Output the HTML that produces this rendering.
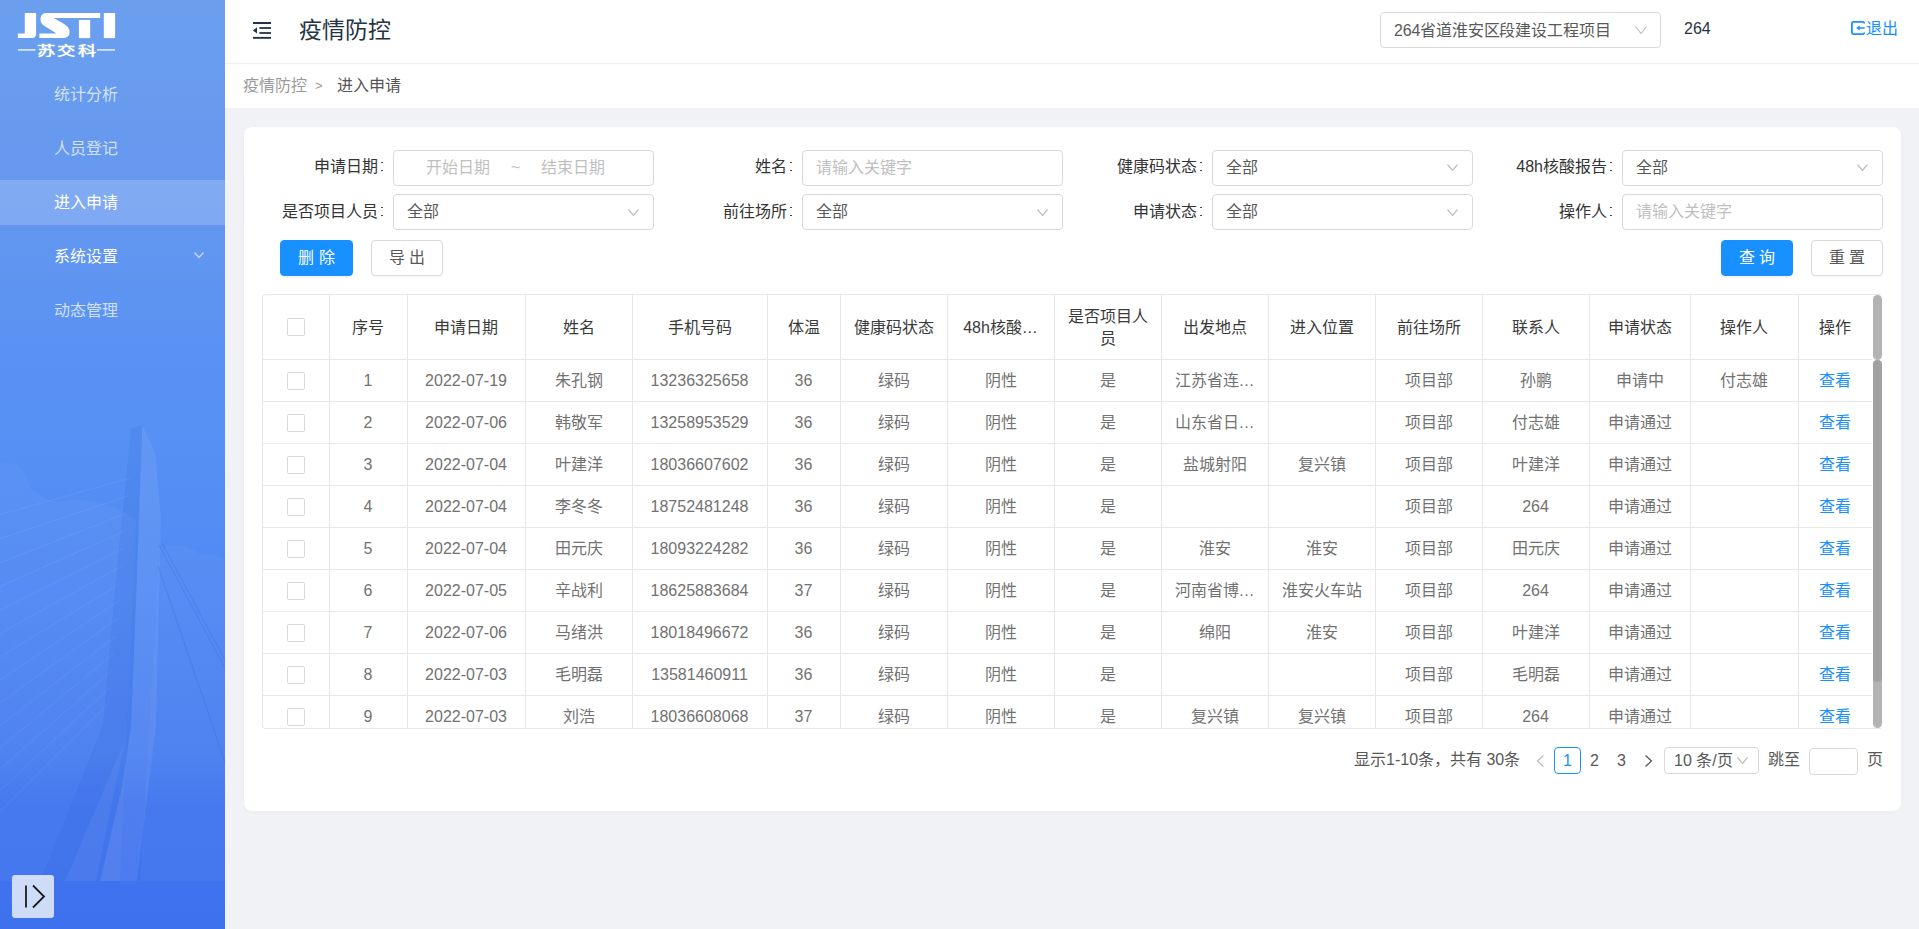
<!DOCTYPE html>
<html lang="zh-CN"><head><meta charset="utf-8">
<style>
*{box-sizing:border-box}
html,body{margin:0;padding:0}
body{width:1919px;height:929px;overflow:hidden;position:relative;background:#f0f2f5;font-family:"Liberation Sans",sans-serif;font-size:16px;color:#595959}
.abs{position:absolute}
#side{position:absolute;left:0;top:0;width:225px;height:929px;background:linear-gradient(180deg,#6b9fee 0%,#6598ef 20%,#5a92f3 38%,#5690f4 48%,#5189f3 64%,#4a7ff0 81%,#4175ee 87%,#3d71ee 100%);overflow:hidden}
.mi{position:absolute;left:54px;font-size:16px;line-height:20px;color:rgba(255,255,255,0.72)}
.mi.on{color:#fff}
#hdr{position:absolute;left:225px;top:0;width:1694px;height:108px;background:#fff}
#hline{position:absolute;left:225px;top:63px;width:1694px;height:1px;background:#eceef1;box-shadow:0 1px 2px rgba(0,0,0,0.03)}
#card{position:absolute;left:244px;top:127px;width:1657px;height:684px;background:#fff;border-radius:8px;box-shadow:0 1px 4px rgba(0,0,0,0.03)}
.lbl{position:absolute;font-size:16px;line-height:20px;color:#333;text-align:right;white-space:nowrap}
.lbl i{display:inline-block;width:6px;height:20px;position:relative;vertical-align:top}
.lbl i:before,.lbl i:after{content:"";position:absolute;left:3px;width:1.5px;height:1.5px;background:#4a4a4a}
.lbl i:before{top:4.6px}
.lbl i:after{top:12.6px}
.inp{position:absolute;height:36px;width:261px;border:1px solid #d9d9d9;border-radius:4px;background:#fff}
.inp span{position:absolute;left:13px;top:7px;line-height:20px;font-size:16px;color:#595959;white-space:nowrap}
.inp span.ph{color:#bfbfbf}
.btn{position:absolute;height:36px;border-radius:4px;font-size:16px;line-height:34px;text-align:center;white-space:pre}
.btn.pri{background:#1890ff;color:#fff;border:1px solid #1890ff;box-shadow:0 2px 0 rgba(0,0,0,0.045)}
.btn.def{background:#fff;color:#595959;border:1px solid #d9d9d9;box-shadow:0 2px 0 rgba(0,0,0,0.015)}
.tb{position:absolute;border:1px solid #e8e8e8;border-right:none;border-radius:4px 0 0 4px}
.vl{position:absolute;width:1px;background:#e8e8e8}
.hl{position:absolute;height:1px;background:#e8e8e8}
.th{position:absolute;text-align:center;font-size:16px;line-height:20px;color:#3a3a3a;white-space:nowrap;padding-top:24px}
.th2{position:absolute;display:flex;align-items:center;justify-content:center;text-align:center;font-size:16px;line-height:22px;color:#3a3a3a;padding-top:2px}
.td{position:absolute;height:42px;line-height:42px;text-align:center;font-size:16px;color:#727272;white-space:nowrap}
.td.link{color:#1890ff}
.cb{position:absolute;width:18px;height:18px;border:1px solid #d9d9d9;border-radius:2px;background:#fff}
</style></head><body>

<div id="side">
  <svg class="abs" style="left:0;top:0" width="225" height="929" viewBox="0 0 225 929">
    <!-- clouds -->
    <path d="M0 464 Q22 458 30 488 Q42 500 60 502 Q90 496 120 510 L136 520 L120 881 L0 881 Z" fill="#ffffff" opacity="0.03"/>
    <path d="M160 548 Q185 540 200 555 Q215 552 225 560 L225 881 L140 881 Z" fill="#ffffff" opacity="0.03"/>
    <!-- pylon dark face -->
    <path d="M131 429 L142.3 425.3 L136 600 L131 725 L122 787 L100 881 L40 881 L78 787 L103 725 L114 600 Z" fill="#2d5ad6" opacity="0.12"/>
    <!-- pylon light face -->
    <path d="M142.3 425.3 L154.7 451.3 L161 516 L159 600 L156 725 L137 881 L100 881 L122 787 L131 725 L136 600 Z" fill="#ffffff" opacity="0.07"/>
    <path d="M125 740 L96 881 L65 881 Z" fill="#ffffff" opacity="0.05"/>
    <!-- cables -->
    <g stroke="#ffffff" stroke-width="1" opacity="0.06">
      <line x1="130.7" y1="478.0" x2="0" y2="514.6"/>
      <line x1="129.1" y1="495.5" x2="0" y2="538.7"/>
      <line x1="127.5" y1="513.0" x2="0" y2="562.7"/>
      <line x1="125.9" y1="530.5" x2="0" y2="586.5"/>
      <line x1="124.3" y1="548.0" x2="0" y2="610.2"/>
      <line x1="122.7" y1="565.5" x2="0" y2="633.6"/>
      <line x1="121.2" y1="583.0" x2="0" y2="656.9"/>
      <line x1="119.6" y1="600.5" x2="0" y2="680.0"/>
      <line x1="118.0" y1="618.0" x2="0" y2="703.0"/>
      <line x1="116.4" y1="635.5" x2="0" y2="725.7"/>
      <line x1="114.2" y1="653.0" x2="0" y2="747.8"/>
      <line x1="111.7" y1="670.5" x2="0" y2="769.3"/>
      <line x1="109.2" y1="688.0" x2="0" y2="790.6"/>
      <line x1="106.7" y1="705.5" x2="0" y2="811.7"/>
    </g>
    <g stroke="#2d5ad6" stroke-width="1.1" opacity="0.2" fill="none">
      <line x1="159" y1="545" x2="225" y2="668"/>
      <line x1="162" y1="543" x2="225" y2="660"/>
      <line x1="158" y1="566" x2="225" y2="762"/>
    </g>
    
  </svg>
  <!-- logo -->
  <svg class="abs" style="left:0;top:0" width="225" height="60" viewBox="0 0 225 60">
    <g fill="#fff">
      <path d="M24.8 13 H36.1 V33.6 Q36.1 38.1 31.6 38.1 H17.9 V33.4 H24.8 Z"/>
      <path d="M46 13 H100.2 V17.9 H53.8 L64.5 24.2 Q69.6 27.5 69.6 32 Q69.6 38.1 62.5 38.1 H39.4 V33.4 H56.5 L44.5 26 Q40.5 23.5 40.5 19.5 Q40.5 13 46 13 Z"/>
      <rect x="78.9" y="19.9" width="11.3" height="18.2"/>
      <rect x="103.8" y="13" width="11.3" height="25.1"/>
      <rect x="18" y="49.2" width="17.5" height="1.4" opacity="0.9"/>
      <rect x="97" y="49.2" width="18" height="1.4" opacity="0.9"/>
    </g>
    <text x="0" y="0" transform="translate(36.5,54.6) scale(1.22,0.86)" font-size="15" font-weight="bold" fill="#fff" letter-spacing="1.9">苏交科</text>
  </svg>
  <div class="mi" style="top:85px">统计分析</div>
  <div class="mi" style="top:139px">人员登记</div>
  <div class="abs" style="left:0;top:180px;width:225px;height:45px;background:rgba(255,255,255,0.18)"></div>
  <div class="mi on" style="top:193px">进入申请</div>
  <div class="mi on" style="top:247px">系统设置</div>
  <svg style="position:absolute;left:194px;top:252px" width="10" height="6" viewBox="0 0 10 6"><polyline points="0.5,0.5 5.0,5.5 9.5,0.5" fill="none" stroke="rgba(255,255,255,0.6)" stroke-width="1.5"/></svg>
  <div class="mi" style="top:301px">动态管理</div>
  <div class="abs" style="left:12px;top:875px;width:42px;height:43px;background:#cfdcf8;border-radius:3px">
    <svg class="abs" style="left:0;top:0" width="42" height="43" viewBox="0 0 42 43">
      <path d="M14 10.5 V32.5" stroke="#1b1b1b" stroke-width="1.8" fill="none"/>
      <path d="M21 10.5 L32 21.5 L21 32.5" stroke="#1b1b1b" stroke-width="1.8" fill="none"/>
    </svg>
  </div>
</div>

<div id="hdr"></div>
<div id="hline"></div>
<!-- menu fold icon -->
<svg class="abs" style="left:246px;top:14px" width="32" height="32" viewBox="0 0 32 32">
  <rect x="7" y="8" width="18" height="2" fill="#203447"/>
  <rect x="13.4" y="13.1" width="11.6" height="1.8" fill="#203447"/>
  <rect x="13.4" y="18.1" width="11.6" height="1.8" fill="#203447"/>
  <rect x="7" y="22.9" width="18" height="1.9" fill="#203447"/>
  <path d="M6.9 16.5 L11 13.3 L11 19.6 Z" fill="#203447"/>
</svg>
<div class="abs" style="left:299px;top:16px;font-size:23px;line-height:28px;color:#243444">疫情防控</div>

<div class="inp" style="left:1380px;top:12px;width:281px;height:36px"><span style="top:8px;letter-spacing:-0.15px">264省道淮安区段建设工程项目</span></div>
<svg style="position:absolute;left:1635px;top:26px" width="12" height="8" viewBox="0 0 12 8"><polyline points="0.5,0.5 6.0,7.5 11.5,0.5" fill="none" stroke="#bfbfbf" stroke-width="1.2"/></svg>
<div class="abs" style="left:1684px;top:19px;font-size:16px;line-height:20px;color:#243444">264</div>
<svg class="abs" style="left:1851px;top:21px" width="14" height="14" viewBox="0 0 14 14">
  <path d="M13.1 1.9 Q13 0.9 11.8 0.9 H2.4 Q0.9 0.9 0.9 2.4 V11.6 Q0.9 13.1 2.4 13.1 H11.8 Q13 13.1 13.1 12.1" stroke="#1890ff" stroke-width="1.8" fill="none" stroke-linecap="round"/>
  <path d="M8 7 H13.1" stroke="#1890ff" stroke-width="1.6" stroke-linecap="round"/>
  <path d="M5.6 7 L8.4 5 L8.4 9 Z" fill="#1890ff" stroke="#1890ff" stroke-width="0.6" stroke-linejoin="round"/>
</svg>
<div class="abs" style="left:1866px;top:19px;font-size:16px;line-height:20px;color:#1890ff">退出</div>

<div class="abs" style="left:243px;top:76px;font-size:16px;line-height:20px;color:#9a9a9a;white-space:nowrap">疫情防控</div>
<div class="abs" style="left:315px;top:77px;font-size:13px;line-height:18px;color:#9a9a9a">&gt;</div>
<div class="abs" style="left:337px;top:76px;font-size:16px;line-height:20px;color:#555;white-space:nowrap">进入申请</div>

<div id="card"></div>

<!-- form row 1 -->
<div class="lbl" style="right:1535px;top:157px">申请日期<i></i></div>
<div class="inp" style="left:393px;top:150px"><span class="ph" style="left:32px">开始日期</span><span class="ph" style="left:117px">~</span><span class="ph" style="left:147px">结束日期</span></div>
<div class="lbl" style="right:1126px;top:157px">姓名<i></i></div>
<div class="inp" style="left:802px;top:150px"><span class="ph">请输入关键字</span></div>
<div class="lbl" style="right:716px;top:157px">健康码状态<i></i></div>
<div class="inp" style="left:1212px;top:150px"><span>全部</span></div>
<div class="lbl" style="right:306px;top:157px">48h核酸报告<i></i></div>
<div class="inp" style="left:1622px;top:150px"><span>全部</span></div>
<svg style="position:absolute;left:1447px;top:164px" width="11" height="7" viewBox="0 0 11 7"><polyline points="0.5,0.5 5.5,6.5 10.5,0.5" fill="none" stroke="#bfbfbf" stroke-width="1.2"/></svg>
<svg style="position:absolute;left:1857px;top:164px" width="11" height="7" viewBox="0 0 11 7"><polyline points="0.5,0.5 5.5,6.5 10.5,0.5" fill="none" stroke="#bfbfbf" stroke-width="1.2"/></svg>

<!-- form row 2 -->
<div class="lbl" style="right:1535px;top:202px">是否项目人员<i></i></div>
<div class="inp" style="left:393px;top:194px"><span>全部</span></div>
<div class="lbl" style="right:1126px;top:202px">前往场所<i></i></div>
<div class="inp" style="left:802px;top:194px"><span>全部</span></div>
<div class="lbl" style="right:716px;top:202px">申请状态<i></i></div>
<div class="inp" style="left:1212px;top:194px"><span>全部</span></div>
<div class="lbl" style="right:306px;top:202px">操作人<i></i></div>
<div class="inp" style="left:1622px;top:194px"><span class="ph">请输入关键字</span></div>
<svg style="position:absolute;left:628px;top:209px" width="11" height="7" viewBox="0 0 11 7"><polyline points="0.5,0.5 5.5,6.5 10.5,0.5" fill="none" stroke="#bfbfbf" stroke-width="1.2"/></svg>
<svg style="position:absolute;left:1037px;top:209px" width="11" height="7" viewBox="0 0 11 7"><polyline points="0.5,0.5 5.5,6.5 10.5,0.5" fill="none" stroke="#bfbfbf" stroke-width="1.2"/></svg>
<svg style="position:absolute;left:1447px;top:209px" width="11" height="7" viewBox="0 0 11 7"><polyline points="0.5,0.5 5.5,6.5 10.5,0.5" fill="none" stroke="#bfbfbf" stroke-width="1.2"/></svg>

<div class="btn pri" style="left:280px;top:240px;width:73px">删 除</div>
<div class="btn def" style="left:371px;top:240px;width:72px">导 出</div>
<div class="btn pri" style="left:1721px;top:240px;width:72px">查 询</div>
<div class="btn def" style="left:1811px;top:240px;width:72px">重 置</div>

<!-- table -->
<div class="tb" style="left:262px;top:294px;width:1619px;height:435px"></div>
<div class="vl" style="left:329px;top:294px;height:434px"></div>
<div class="vl" style="left:407px;top:294px;height:434px"></div>
<div class="vl" style="left:525px;top:294px;height:434px"></div>
<div class="vl" style="left:632px;top:294px;height:434px"></div>
<div class="vl" style="left:767px;top:294px;height:434px"></div>
<div class="vl" style="left:840px;top:294px;height:434px"></div>
<div class="vl" style="left:947px;top:294px;height:434px"></div>
<div class="vl" style="left:1054px;top:294px;height:434px"></div>
<div class="vl" style="left:1161px;top:294px;height:434px"></div>
<div class="vl" style="left:1268px;top:294px;height:434px"></div>
<div class="vl" style="left:1375px;top:294px;height:434px"></div>
<div class="vl" style="left:1482px;top:294px;height:434px"></div>
<div class="vl" style="left:1589px;top:294px;height:434px"></div>
<div class="vl" style="left:1690px;top:294px;height:434px"></div>
<div class="vl" style="left:1798px;top:294px;height:434px"></div>
<div class="hl" style="left:262px;top:359px;width:1610px"></div>
<div class="hl" style="left:262px;top:401px;width:1610px"></div>
<div class="hl" style="left:262px;top:443px;width:1610px"></div>
<div class="hl" style="left:262px;top:485px;width:1610px"></div>
<div class="hl" style="left:262px;top:527px;width:1610px"></div>
<div class="hl" style="left:262px;top:569px;width:1610px"></div>
<div class="hl" style="left:262px;top:611px;width:1610px"></div>
<div class="hl" style="left:262px;top:653px;width:1610px"></div>
<div class="hl" style="left:262px;top:695px;width:1610px"></div>
<div class="cb" style="left:287px;top:318px"></div>
<div class="th" style="left:329px;top:294px;width:78px;height:65px">序号</div>
<div class="th" style="left:407px;top:294px;width:118px;height:65px">申请日期</div>
<div class="th" style="left:525px;top:294px;width:107px;height:65px">姓名</div>
<div class="th" style="left:632px;top:294px;width:135px;height:65px">手机号码</div>
<div class="th" style="left:767px;top:294px;width:73px;height:65px">体温</div>
<div class="th" style="left:840px;top:294px;width:107px;height:65px">健康码状态</div>
<div class="th" style="left:947px;top:294px;width:107px;height:65px">48h核酸…</div>
<div class="th2" style="left:1054px;top:294px;width:107px;height:65px">是否项目人<br>员</div>
<div class="th" style="left:1161px;top:294px;width:107px;height:65px">出发地点</div>
<div class="th" style="left:1268px;top:294px;width:107px;height:65px">进入位置</div>
<div class="th" style="left:1375px;top:294px;width:107px;height:65px">前往场所</div>
<div class="th" style="left:1482px;top:294px;width:107px;height:65px">联系人</div>
<div class="th" style="left:1589px;top:294px;width:101px;height:65px">申请状态</div>
<div class="th" style="left:1690px;top:294px;width:108px;height:65px">操作人</div>
<div class="th" style="left:1798px;top:294px;width:74px;height:65px">操作</div>
<div class="cb" style="left:287px;top:372px"></div>
<div class="td" style="left:329px;top:360px;width:78px">1</div>
<div class="td" style="left:407px;top:360px;width:118px">2022-07-19</div>
<div class="td" style="left:525px;top:360px;width:107px">朱孔钢</div>
<div class="td" style="left:632px;top:360px;width:135px">13236325658</div>
<div class="td" style="left:767px;top:360px;width:73px">36</div>
<div class="td" style="left:840px;top:360px;width:107px">绿码</div>
<div class="td" style="left:947px;top:360px;width:107px">阴性</div>
<div class="td" style="left:1054px;top:360px;width:107px">是</div>
<div class="td" style="left:1161px;top:360px;width:107px">江苏省连…</div>
<div class="td" style="left:1375px;top:360px;width:107px">项目部</div>
<div class="td" style="left:1482px;top:360px;width:107px">孙鹏</div>
<div class="td" style="left:1589px;top:360px;width:101px">申请中</div>
<div class="td" style="left:1690px;top:360px;width:108px">付志雄</div>
<div class="td link" style="left:1798px;top:360px;width:74px">查看</div>
<div class="cb" style="left:287px;top:414px"></div>
<div class="td" style="left:329px;top:402px;width:78px">2</div>
<div class="td" style="left:407px;top:402px;width:118px">2022-07-06</div>
<div class="td" style="left:525px;top:402px;width:107px">韩敬军</div>
<div class="td" style="left:632px;top:402px;width:135px">13258953529</div>
<div class="td" style="left:767px;top:402px;width:73px">36</div>
<div class="td" style="left:840px;top:402px;width:107px">绿码</div>
<div class="td" style="left:947px;top:402px;width:107px">阴性</div>
<div class="td" style="left:1054px;top:402px;width:107px">是</div>
<div class="td" style="left:1161px;top:402px;width:107px">山东省日…</div>
<div class="td" style="left:1375px;top:402px;width:107px">项目部</div>
<div class="td" style="left:1482px;top:402px;width:107px">付志雄</div>
<div class="td" style="left:1589px;top:402px;width:101px">申请通过</div>
<div class="td link" style="left:1798px;top:402px;width:74px">查看</div>
<div class="cb" style="left:287px;top:456px"></div>
<div class="td" style="left:329px;top:444px;width:78px">3</div>
<div class="td" style="left:407px;top:444px;width:118px">2022-07-04</div>
<div class="td" style="left:525px;top:444px;width:107px">叶建洋</div>
<div class="td" style="left:632px;top:444px;width:135px">18036607602</div>
<div class="td" style="left:767px;top:444px;width:73px">36</div>
<div class="td" style="left:840px;top:444px;width:107px">绿码</div>
<div class="td" style="left:947px;top:444px;width:107px">阴性</div>
<div class="td" style="left:1054px;top:444px;width:107px">是</div>
<div class="td" style="left:1161px;top:444px;width:107px">盐城射阳</div>
<div class="td" style="left:1268px;top:444px;width:107px">复兴镇</div>
<div class="td" style="left:1375px;top:444px;width:107px">项目部</div>
<div class="td" style="left:1482px;top:444px;width:107px">叶建洋</div>
<div class="td" style="left:1589px;top:444px;width:101px">申请通过</div>
<div class="td link" style="left:1798px;top:444px;width:74px">查看</div>
<div class="cb" style="left:287px;top:498px"></div>
<div class="td" style="left:329px;top:486px;width:78px">4</div>
<div class="td" style="left:407px;top:486px;width:118px">2022-07-04</div>
<div class="td" style="left:525px;top:486px;width:107px">李冬冬</div>
<div class="td" style="left:632px;top:486px;width:135px">18752481248</div>
<div class="td" style="left:767px;top:486px;width:73px">36</div>
<div class="td" style="left:840px;top:486px;width:107px">绿码</div>
<div class="td" style="left:947px;top:486px;width:107px">阴性</div>
<div class="td" style="left:1054px;top:486px;width:107px">是</div>
<div class="td" style="left:1375px;top:486px;width:107px">项目部</div>
<div class="td" style="left:1482px;top:486px;width:107px">264</div>
<div class="td" style="left:1589px;top:486px;width:101px">申请通过</div>
<div class="td link" style="left:1798px;top:486px;width:74px">查看</div>
<div class="cb" style="left:287px;top:540px"></div>
<div class="td" style="left:329px;top:528px;width:78px">5</div>
<div class="td" style="left:407px;top:528px;width:118px">2022-07-04</div>
<div class="td" style="left:525px;top:528px;width:107px">田元庆</div>
<div class="td" style="left:632px;top:528px;width:135px">18093224282</div>
<div class="td" style="left:767px;top:528px;width:73px">36</div>
<div class="td" style="left:840px;top:528px;width:107px">绿码</div>
<div class="td" style="left:947px;top:528px;width:107px">阴性</div>
<div class="td" style="left:1054px;top:528px;width:107px">是</div>
<div class="td" style="left:1161px;top:528px;width:107px">淮安</div>
<div class="td" style="left:1268px;top:528px;width:107px">淮安</div>
<div class="td" style="left:1375px;top:528px;width:107px">项目部</div>
<div class="td" style="left:1482px;top:528px;width:107px">田元庆</div>
<div class="td" style="left:1589px;top:528px;width:101px">申请通过</div>
<div class="td link" style="left:1798px;top:528px;width:74px">查看</div>
<div class="cb" style="left:287px;top:582px"></div>
<div class="td" style="left:329px;top:570px;width:78px">6</div>
<div class="td" style="left:407px;top:570px;width:118px">2022-07-05</div>
<div class="td" style="left:525px;top:570px;width:107px">辛战利</div>
<div class="td" style="left:632px;top:570px;width:135px">18625883684</div>
<div class="td" style="left:767px;top:570px;width:73px">37</div>
<div class="td" style="left:840px;top:570px;width:107px">绿码</div>
<div class="td" style="left:947px;top:570px;width:107px">阴性</div>
<div class="td" style="left:1054px;top:570px;width:107px">是</div>
<div class="td" style="left:1161px;top:570px;width:107px">河南省博…</div>
<div class="td" style="left:1268px;top:570px;width:107px">淮安火车站</div>
<div class="td" style="left:1375px;top:570px;width:107px">项目部</div>
<div class="td" style="left:1482px;top:570px;width:107px">264</div>
<div class="td" style="left:1589px;top:570px;width:101px">申请通过</div>
<div class="td link" style="left:1798px;top:570px;width:74px">查看</div>
<div class="cb" style="left:287px;top:624px"></div>
<div class="td" style="left:329px;top:612px;width:78px">7</div>
<div class="td" style="left:407px;top:612px;width:118px">2022-07-06</div>
<div class="td" style="left:525px;top:612px;width:107px">马绪洪</div>
<div class="td" style="left:632px;top:612px;width:135px">18018496672</div>
<div class="td" style="left:767px;top:612px;width:73px">36</div>
<div class="td" style="left:840px;top:612px;width:107px">绿码</div>
<div class="td" style="left:947px;top:612px;width:107px">阴性</div>
<div class="td" style="left:1054px;top:612px;width:107px">是</div>
<div class="td" style="left:1161px;top:612px;width:107px">绵阳</div>
<div class="td" style="left:1268px;top:612px;width:107px">淮安</div>
<div class="td" style="left:1375px;top:612px;width:107px">项目部</div>
<div class="td" style="left:1482px;top:612px;width:107px">叶建洋</div>
<div class="td" style="left:1589px;top:612px;width:101px">申请通过</div>
<div class="td link" style="left:1798px;top:612px;width:74px">查看</div>
<div class="cb" style="left:287px;top:666px"></div>
<div class="td" style="left:329px;top:654px;width:78px">8</div>
<div class="td" style="left:407px;top:654px;width:118px">2022-07-03</div>
<div class="td" style="left:525px;top:654px;width:107px">毛明磊</div>
<div class="td" style="left:632px;top:654px;width:135px">13581460911</div>
<div class="td" style="left:767px;top:654px;width:73px">36</div>
<div class="td" style="left:840px;top:654px;width:107px">绿码</div>
<div class="td" style="left:947px;top:654px;width:107px">阴性</div>
<div class="td" style="left:1054px;top:654px;width:107px">是</div>
<div class="td" style="left:1375px;top:654px;width:107px">项目部</div>
<div class="td" style="left:1482px;top:654px;width:107px">毛明磊</div>
<div class="td" style="left:1589px;top:654px;width:101px">申请通过</div>
<div class="td link" style="left:1798px;top:654px;width:74px">查看</div>
<div class="cb" style="left:287px;top:708px"></div>
<div class="td" style="left:329px;top:696px;width:78px">9</div>
<div class="td" style="left:407px;top:696px;width:118px">2022-07-03</div>
<div class="td" style="left:525px;top:696px;width:107px">刘浩</div>
<div class="td" style="left:632px;top:696px;width:135px">18036608068</div>
<div class="td" style="left:767px;top:696px;width:73px">37</div>
<div class="td" style="left:840px;top:696px;width:107px">绿码</div>
<div class="td" style="left:947px;top:696px;width:107px">阴性</div>
<div class="td" style="left:1054px;top:696px;width:107px">是</div>
<div class="td" style="left:1161px;top:696px;width:107px">复兴镇</div>
<div class="td" style="left:1268px;top:696px;width:107px">复兴镇</div>
<div class="td" style="left:1375px;top:696px;width:107px">项目部</div>
<div class="td" style="left:1482px;top:696px;width:107px">264</div>
<div class="td" style="left:1589px;top:696px;width:101px">申请通过</div>
<div class="td link" style="left:1798px;top:696px;width:74px">查看</div>
<!-- scrollbar -->
<div class="abs" style="left:1873px;top:295px;width:9px;height:65px;background:#b3b3b3;border-radius:4.5px"></div>
<div class="abs" style="left:1873px;top:360px;width:9px;height:368px;background:#b3b3b3;border-radius:4.5px"></div>
<div class="abs" style="left:1873px;top:360px;width:9px;height:322px;background:#a1a1a1;border-radius:4.5px"></div>

<!-- pagination -->
<div class="abs" style="left:1354px;top:750px;font-size:16px;line-height:20px;color:#595959;white-space:nowrap">显示1-10条，共有 30条</div>
<svg class="abs" style="left:1536px;top:755px" width="9" height="12" viewBox="0 0 9 12"><polyline points="7.5,0.5 1.5,6 7.5,11.5" fill="none" stroke="#bfbfbf" stroke-width="1.3"/></svg>
<div class="abs" style="left:1554px;top:747px;width:27px;height:27px;border:1px solid #1890ff;border-radius:4px;color:#1890ff;text-align:center;line-height:25px;font-size:16px">1</div>
<div class="abs" style="left:1581px;top:747px;width:27px;height:27px;color:#595959;text-align:center;line-height:27px;font-size:16px">2</div>
<div class="abs" style="left:1608px;top:747px;width:27px;height:27px;color:#595959;text-align:center;line-height:27px;font-size:16px">3</div>
<svg class="abs" style="left:1644px;top:755px" width="9" height="12" viewBox="0 0 9 12"><polyline points="1.5,0.5 7.5,6 1.5,11.5" fill="none" stroke="#595959" stroke-width="1.3"/></svg>
<div class="inp" style="left:1664px;top:747px;width:95px;height:27px"><span style="left:9px;top:3px">10 条/页</span></div>
<svg style="position:absolute;left:1737px;top:757px" width="11" height="7" viewBox="0 0 11 7"><polyline points="0.5,0.5 5.5,6.5 10.5,0.5" fill="none" stroke="#bfbfbf" stroke-width="1.2"/></svg>
<div class="abs" style="left:1768px;top:750px;font-size:16px;line-height:20px;color:#595959">跳至</div>
<div class="inp" style="left:1809px;top:748px;width:49px;height:27px"></div>
<div class="abs" style="left:1867px;top:750px;font-size:16px;line-height:20px;color:#595959">页</div>

</body></html>
